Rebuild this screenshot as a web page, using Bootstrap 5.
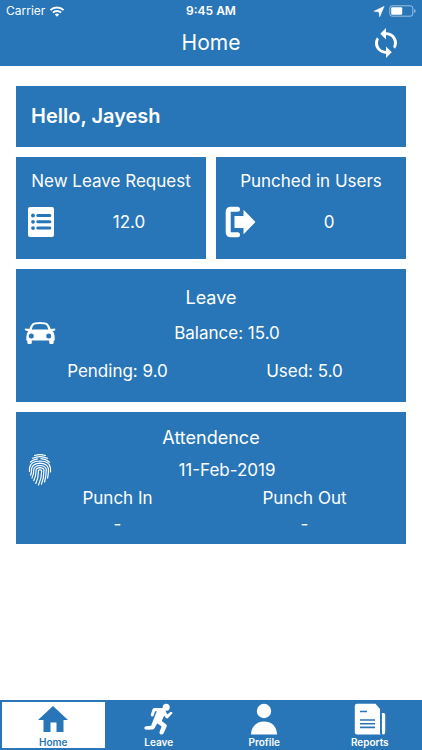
<!DOCTYPE html>
<html lang="en">
<head>
<meta charset="utf-8">
<meta name="viewport" content="width=device-width, initial-scale=1">
<title>Home</title>
<link href="https://cdn.jsdelivr.net/npm/bootstrap@5.3.0/dist/css/bootstrap.min.css" rel="stylesheet">
<style>
:root { --brand: #2876b8; }
body { font-family: Inter, "Liberation Sans", sans-serif; font-size: 17px; line-height: 22px; background: #fff; }
svg { display: block; }
.brand-bg { background: var(--brand); color: #fff; }
.status { font-size: 12px; height: 22px; padding: 0 6px; }
.status > * { flex: 1 1 0; }
.title-row { height: 44px; padding-bottom: 3px; }
.title-row h1 { font-size: 21px; line-height: 28px; }
.side { flex: 1 1 0; }
.sync { padding: 0; margin-right: 20px; }
main { padding: 20px 16px; gap: 10px; }
.hello { padding: 18px 15px; }
.hello h2 { font-size: 20px; line-height: 25px; }
.tile { border: 0; border-radius: 0; }
.tile h3 { font-size: 18px; line-height: 22px; font-weight: 400; margin: 0; }
.tile .tile-small { font-size: 17px; }
.pair { gap: 10px; }
.stat { padding: 13px 0 21px; gap: 14px; }
.stat-row { padding: 0 4px 0 8px; }
.wide { padding: 18px 8px 20px; }
.wide .below { margin-top: 11px; }
.wide .title-gap { margin-bottom: 8px; }
.punch { padding: 15px 8px 9px; }
.punch .title-gap { margin-bottom: 5px; }
.punch .below { margin-top: 1px; }
.punch dd { margin: 4px 0 0; }
dl, dt, dd { margin: 0; font-weight: 400; }
.tabs { height: 50px; }
.tabs a { margin: 2px 1px 2px 2px; padding-top: 1px; font-size: 10px; line-height: 12px; font-weight: 600; color: #fff; text-decoration: none; }
.tabs a.current { background: #fff; color: var(--brand); }
.tabs a svg { margin-bottom: 1px; }
</style>
</head>
<body class="d-flex flex-column min-vh-100">
<header class="brand-bg">
  <div class="status d-flex align-items-center">
    <div class="d-flex align-items-center gap-1"><span>Carrier</span>
      <svg width="16" height="11" viewBox="0 0 16 11" fill="none" stroke="#fff" stroke-width="2"><path d="M1.4 4.1a9.4 9.4 0 0 1 13.2 0M3.9 6.6a5.8 5.8 0 0 1 8.2 0"/><path d="M8 10.8L5.8 8.6a3.1 3.1 0 0 1 4.4 0z" fill="#fff" stroke="none"/></svg>
    </div>
    <div class="text-center fw-semibold">9:45 AM</div>
    <div class="d-flex align-items-center justify-content-end gap-1">
      <svg width="12" height="11" viewBox="0 0 12 11" fill="#fff"><path d="M11.200.3L6.700 10.900 5.900 6 .8 5.300z" stroke="#fff" stroke-width=".4"/></svg>
      <svg width="27" height="12" viewBox="0 0 27 12"><rect x=".8" y=".8" width="23" height="10.4" rx="2.4" fill="none" stroke="#fff" stroke-opacity=".55"/><rect x="2.2" y="2.2" width="11" height="7.6" rx="1" fill="#fff"/><path d="M25.2 4v4q1.4-.6 1.4-2t-1.4-2z" fill="#fff" fill-opacity=".55"/></svg>
    </div>
  </div>
  <div class="title-row d-flex align-items-center">
    <div class="side"></div>
    <h1 class="m-0 fw-normal">Home</h1>
    <div class="side d-flex justify-content-end">
      <button type="button" class="btn sync border-0" aria-label="Refresh">
        <svg width="32" height="32" viewBox="0 0 24 24" fill="#fff"><path d="M12 4V.7L7.700 5l4.300 4.300V6c3.31 0 6 2.69 6 6 0 1.01-.25 1.97-.7 2.8l1.46 1.46A7.93 7.93 0 0 0 20.300 12c0-4.42-3.88-8-8.300-8zm0 14c-3.31 0-6-2.69-6-6 0-1.01.25-1.97.7-2.8L5.24 7.74A7.93 7.93 0 0 0 3.700 12c0 4.42 3.88 8 8.300 8v3.300l4.300-4.300-4.300-4.300z"/></svg>
      </button>
    </div>
  </div>
</header>

<main class="d-flex flex-column flex-grow-1">
  <section class="card tile brand-bg hello"><h2 class="m-0 fw-semibold">Hello, Jayesh</h2></section>

  <div class="pair d-flex">
    <section class="card tile brand-bg stat flex-fill w-50">
      <h3 class="tile-small text-center text-nowrap">New Leave Request</h3>
      <div class="stat-row d-flex align-items-center">
        <svg width="32" height="32" viewBox="0 0 32 32"><rect x="4" y="1" width="26" height="30" rx="2" fill="#fff"/><g fill="#2876b8"><circle cx="9" cy="9.5" r="1.9"/><circle cx="9" cy="15.8" r="1.9"/><circle cx="9" cy="22.1" r="1.9"/><rect x="12.3" y="8" width="15" height="3" rx="1.5"/><rect x="12.3" y="14.3" width="15" height="3" rx="1.5"/><rect x="12.3" y="20.6" width="15" height="3" rx="1.5"/></g></svg>
        <div class="flex-fill text-center">12.0</div>
      </div>
    </section>
    <section class="card tile brand-bg stat flex-fill w-50">
      <h3 class="tile-small text-center text-nowrap">Punched in Users</h3>
      <div class="stat-row d-flex align-items-center">
        <svg width="32" height="32" viewBox="0 0 32 32"><path d="M13.5 3.2H7Q4.2 3.2 4.2 6v20q0 2.8 2.8 2.8h6.500" fill="none" stroke="#fff" stroke-width="5" stroke-linecap="round"/><path d="M10.500 10h9V4.600q0-1 .8-.2l10.700 11.200q.4.4 0 .8L20.300 27.600q-.8.8-.8-.2V22h-9z" fill="#fff"/></svg>
        <div class="flex-fill text-center">0</div>
      </div>
    </section>
  </div>

  <section class="card tile brand-bg wide">
    <h3 class="text-center title-gap">Leave</h3>
    <div class="d-flex align-items-center">
      <svg width="32" height="32" viewBox="0 0 32 32" fill="#fff"><path fill-rule="evenodd" d="M8.200 6.800Q10 5 16 5t7.800 1.800Q25.600 8.600 26.700 12l3.600-.6q1 0 1 1t-1 1.300l-1.600.5q2 1.800 2 5.300v4h-1v2q0 1.500-1.500 1.500h-1.500q-1.500 0-1.500-1.500v-2H7.800v2q0 1.500-1.500 1.500H4.800q-1.500 0-1.500-1.500v-2h-1v-4q0-3.500 2-5.300l-1.600-.5Q.7 13.400.7 12.400t1-1l3.600.6Q6.400 8.600 8.200 6.800zM9.800 8Q8.500 9.200 7.700 12.600h16.600Q23.500 9.200 22.200 8 20.800 7 16 7T9.800 8zM7.300 16.600a2.500 2.500 0 1 0 0 5 2.500 2.500 0 0 0 0-5zm17.400 0a2.500 2.500 0 1 0 0 5 2.500 2.500 0 0 0 0-5z"/></svg>
      <div class="flex-fill text-center">Balance: 15.0</div>
    </div>
    <div class="row g-0 text-center below">
      <div class="col-6">Pending: 9.0</div>
      <div class="col-6">Used: 5.0</div>
    </div>
  </section>

  <section class="card tile brand-bg punch">
    <h3 class="text-center title-gap">Attendence</h3>
    <div class="d-flex align-items-center">
      <svg width="32" height="32" viewBox="0 0 32 32" fill="none" stroke="#fff" stroke-width="1.200" stroke-linecap="round"><path d="M10.500 1.500q5.500-1.600 11 0M8.500 4.300q7.500-3.300 15 0M6.500 8q3.200-2.800 7-3.200M17 4.700q5 .4 8.500 3.500M5.500 17.500v-3.300q.6-6.900 10.500-7.200 9.900.3 10.500 7.200v3.800M6.600 21.200q1-2 1-6.500 1-5.200 8.400-5.500 7.400.3 8.400 5.500.2 5-.8 9.500M8 24q1.800-3.500 1.800-8.800.8-3.500 6.200-3.700 5.400.2 6.200 3.700.2 6.500-1.600 12.800M9.800 26.600q2.400-5 2.300-10.900.5-1.900 3.900-2 3.400.1 3.900 2 .2 8-2.400 14.400M11.800 29.400q2.900-6 2.500-12.600 0-1 1.700-1t1.700 1q0 7.500-3.200 14.200"/></svg>
      <div class="flex-fill text-center">11-Feb-2019</div>
    </div>
    <div class="row g-0 text-center below">
      <dl class="col-6"><dt>Punch In</dt><dd>-</dd></dl>
      <dl class="col-6"><dt>Punch Out</dt><dd>-</dd></dl>
    </div>
  </section>
</main>

<nav class="tabs brand-bg row g-0 row-cols-4" aria-label="Main">
  <div class="d-flex"><a href="#home" class="current flex-fill d-flex flex-column align-items-center" aria-current="page">
    <svg width="32" height="32" viewBox="0 0 32 32" fill="currentColor"><path d="M16 3L31 17h-4.500v12h-7V19.500h-6V29h-7V17H1z"/></svg>Home</a></div>
  <div class="d-flex"><a href="#leave" class="flex-fill d-flex flex-column align-items-center">
    <svg width="32" height="32" viewBox="0 0 32 32" fill="#fff"><circle cx="23.200" cy="4.200" r="3.500"/><path d="M11.500 5h8.300q1.500.2 2.200 1.800l2.300 4.800 3.200-2.500q1.800-.6 2 1.200l-4.500 4.800q-1.200.8-2.300-.4l-1.500-2.200-2.400 5.500 4.200 3.300q1.200 1 .6 2.500L20.500 30.600q-1.300 1.600-3.200.6-1.200-.9-.7-2.400l2-5.200-4.300-3.300-2.800 5q-.6 1-1.800 1.100l-6.400.4q-2-.2-2-1.900.1-1.500 1.800-1.700l5-.5 5.700-14.500h-1.700L10.700 12.600q-.7 1.200-1.900.8-1.300-.5-1-1.900l1.800-5.300Q10.200 5 11.500 5z"/></svg>Leave</a></div>
  <div class="d-flex"><a href="#profile" class="flex-fill d-flex flex-column align-items-center">
    <svg width="32" height="32" viewBox="0 0 32 32" fill="#fff"><circle cx="16" cy="8" r="7.200"/><path d="M3 31.500C3 23 9 18.500 16 18.500S29 23 29 31.500z"/></svg>Profile</a></div>
  <div class="d-flex"><a href="#reports" class="flex-fill d-flex flex-column align-items-center">
    <svg width="32" height="32" viewBox="0 0 32 32"><path d="M3 .8h18.500L26 6v23q0 2.500 2 2.500H3Q.8 31.500.8 29.300V3Q.8.8 3 .8z" fill="#fff"/><path d="M27.800 10h1.700q1.700 0 1.700 1.700v17q0 2.800-1.700 2.800t-1.700-2.500z" fill="#fff"/><path d="M26.900 9v22.500" stroke="#2876b8" stroke-width="1.500"/><path d="M6 8.500h7M6 17h15M6 20.700h15M6 24.400h15" stroke="#2876b8" stroke-width="1.600"/></svg>Reports</a></div>
</nav>
<script src="https://cdn.jsdelivr.net/npm/bootstrap@5.3.0/dist/js/bootstrap.bundle.min.js"></script>
</body>
</html>
